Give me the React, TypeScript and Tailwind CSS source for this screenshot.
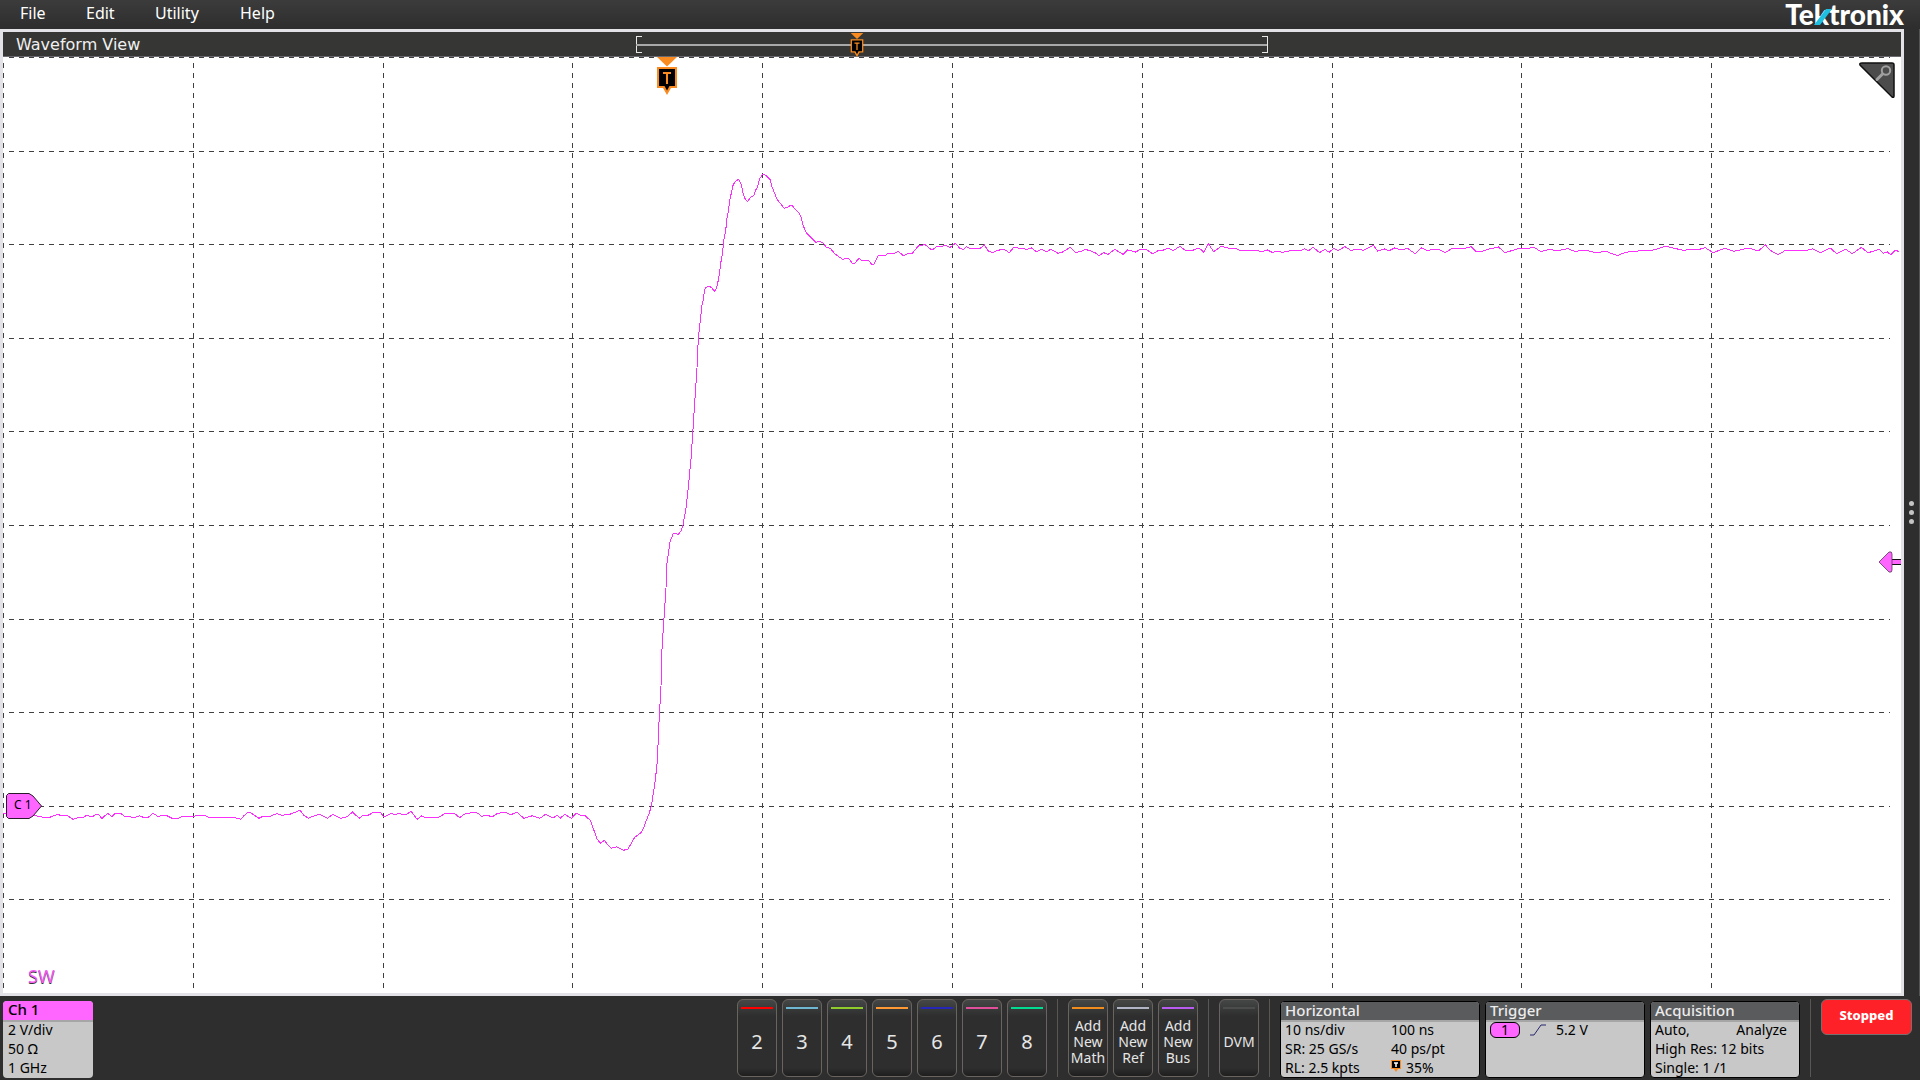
import React from 'react'

type Point = [number, number]

// the record is kept in parts, each with its own x scale
const idle: Point[] = [
    [8, 160], [85, 168], [100, 172], [115, 172], [122, 168], [133, 163], [143, 168], [155, 166], [168, 178], [180, 173], [190, 174], [200, 166],
    [212, 171], [222, 163], [228, 164], [235, 176], [248, 160], [258, 170], [266, 160], [278, 160], [288, 170], [300, 170], [310, 173], [322, 167],
    [332, 173], [342, 172], [353, 160], [365, 170], [375, 166], [385, 167], [397, 175], [412, 175], [418, 170], [443, 170], [455, 166], [472, 166],
    [485, 174], [520, 173], [545, 174], [555, 178], [562, 168], [572, 156], [580, 160], [597, 175], [608, 168], [620, 170], [638, 161], [650, 166],
    [670, 162], [692, 151], [700, 165], [711, 175], [725, 167], [738, 163], [755, 175], [768, 163], [785, 175], [800, 170], [813, 156], [828, 175],
    [838, 165], [850, 165], [863, 156], [878, 158], [885, 171], [902, 160], [912, 164], [920, 160], [930, 165], [938, 163], [948, 154], [962, 178],
    [972, 168], [982, 173], [1010, 173], [1028, 159], [1050, 162], [1060, 173], [1070, 163], [1090, 157], [1103, 160], [1110, 169], [1122, 165],
    [1135, 171], [1147, 160], [1165, 157], [1178, 164], [1192, 157], [1208, 175], [1228, 167], [1245, 175], [1258, 163], [1275, 174], [1285, 166],
    [1292, 175], [1302, 163], [1318, 175], [1328, 160], [1340, 166], [1350, 168], [1362, 182], [1370, 212], [1376, 235], [1384, 250], [1394, 241],
    [1402, 256], [1410, 265], [1422, 260], [1438, 271], [1448, 267], [1455, 252], [1463, 233], [1478, 218], [1485, 202], [1490, 183], [1497, 160],
    [1502, 138], [1508, 90], [1512, 50], [1516, 0],
]

const edge: Point[] = [
    [659, 722], [661, 686], [662, 649], [664, 618], [666, 588], [667, 563], [670, 542], [673, 534], [676, 533], [678, 535], [681, 531], [683, 525],
    [686, 508], [688, 490], [691, 459], [693, 429], [695, 398], [697, 368],
]

const overshoot: Point[] = [
    [415, 566], [418, 540], [421, 510], [424, 485], [425, 468], [431, 445], [433, 420], [437, 413], [447, 408], [455, 413], [463, 424],
    [469, 416], [473, 400], [478, 373], [482, 340], [488, 305], [491, 273], [497, 243], [500, 210], [506, 178], [509, 150], [515, 125], [518, 108],
    [524, 97], [534, 89], [538, 90], [545, 108], [549, 128], [556, 148], [563, 155], [571, 143], [583, 135], [586, 122], [593, 110], [598, 88],
    [607, 74], [614, 74], [622, 80], [631, 90], [635, 108], [640, 120], [647, 138], [652, 149], [661, 160], [672, 175], [683, 172], [691, 166],
    [698, 168], [705, 178], [715, 186], [724, 203], [730, 228], [740, 250], [755, 265], [767, 277], [779, 274], [790, 279], [798, 291], [812, 296],
    [823, 310], [835, 319], [848, 328], [866, 325], [877, 340], [884, 340], [897, 325], [905, 331], [925, 331], [935, 343], [941, 343], [955, 317],
    [975, 317], [985, 310], [1003, 310], [1015, 304], [1030, 317], [1042, 311], [1057, 310], [1075, 288], [1095, 284], [1113, 298], [1120, 298],
    [1130, 289], [1148, 289], [1155, 286], [1170, 292], [1185, 281], [1190, 283], [1200, 296],
]

const settled: Point[] = [
    [98, 88], [102, 80], [108, 86], [122, 86], [130, 75], [135, 92], [142, 98], [150, 91], [160, 88], [168, 98], [175, 82], [188, 86], [195, 88],
    [202, 84], [210, 95], [218, 88], [225, 95], [232, 88], [243, 100], [250, 96], [262, 82], [270, 97], [278, 95], [285, 88], [293, 93], [300, 98],
    [306, 107], [313, 98], [320, 103], [330, 88], [343, 103], [350, 90], [362, 96], [370, 88], [378, 88], [388, 101], [397, 92], [403, 92],
    [412, 84], [420, 92], [430, 79], [438, 90], [450, 91], [460, 84], [467, 97], [474, 70], [482, 95], [494, 79], [504, 84], [515, 84], [525, 93],
    [535, 91], [548, 91], [555, 95], [565, 90], [572, 97], [580, 94], [588, 97], [600, 92], [615, 93], [622, 86], [628, 92], [635, 82], [645, 98],
    [653, 88], [660, 97], [667, 84], [673, 92], [684, 80], [693, 91], [705, 88], [712, 91], [720, 84], [728, 76], [734, 93], [745, 87], [752, 92],
    [760, 84], [772, 90], [780, 85], [792, 101], [802, 83], [810, 91], [828, 88], [838, 98], [850, 84], [865, 87], [878, 80], [885, 94], [895, 94],
    [905, 87], [920, 81], [930, 98], [940, 92], [953, 84], [960, 87], [975, 82], [985, 95], [998, 88], [1010, 92], [1027, 86], [1037, 94],
    [1055, 91], [1070, 98], [1085, 94], [1103, 107], [1115, 97], [1135, 93], [1145, 91], [1153, 93], [1165, 86], [1177, 79], [1190, 85],
    [1205, 91], [1215, 88], [1225, 90], [1238, 83], [1250, 98], [1268, 85], [1282, 94], [1305, 84], [1320, 93], [1330, 74], [1337, 90],
    [1350, 104], [1362, 90], [1375, 93], [1393, 92], [1403, 86], [1415, 98], [1430, 84], [1440, 101], [1454, 88], [1464, 101], [1478, 82],
    [1488, 98], [1498, 93], [1505, 88], [1512, 100], [1518, 96], [1523, 104], [1530, 90], [1536, 95],
]

const place = (points: Point[], x: number, y: number, perX: number, perY: number) =>
    points.map(([px, py]) => `${(x + px / perX).toFixed(1)},${(y + py / perY).toFixed(1)}`)

const trace = [
    ...place(idle, 0, 760, 2.306, 3),
    ...place(edge, 0, 0, 1, 1),
    ...place(overshoot, 560, 150, 3, 3),
    ...place(settled, 900, 220, 1.5373, 3),
].join(' ')

const columns = [3.5, 193.5, 383.5, 572.5, 762.5, 952.5, 1142.5, 1332.5, 1521.5, 1711.5]
const rows = [57.5, 151.5, 244.5, 338.5, 431.5, 525.5, 619.5, 712.5, 806.5, 899.5]

const menus = [
    { name: 'File', width: 'w-[66px]' },
    { name: 'Edit', width: 'w-[69px]' },
    { name: 'Utility', width: 'w-[85px]' },
    { name: 'Help', width: 'w-[66px]' },
]

const channels = [
    { name: '2', color: 'bg-[#ff0000]' },
    { name: '3', color: 'bg-[#6fb7d0]' },
    { name: '4', color: 'bg-[#8fcb2b]' },
    { name: '5', color: 'bg-[#ff9933]' },
    { name: '6', color: 'bg-[#2626b8]' },
    { name: '7', color: 'bg-[#e0509a]' },
    { name: '8', color: 'bg-[#00dd90]' },
]

const adders = [
    { name: 'Math', color: 'bg-[#f08c1e]' },
    { name: 'Ref', color: 'bg-[#b0b4c4]' },
    { name: 'Bus', color: 'bg-[#b85cf0]' },
]

function Logo() {
    return (
        <div className="relative text-[28px] leading-[29px] font-black text-white font-['Lato','Noto_Sans',sans-serif]">
            Tektronix
            <svg className="absolute top-1 left-[29px] h-[22px] w-[18px]" viewBox="0 0 18 22" aria-hidden="true">
                <path d="M12 5H18L6 21H0Z" fill="#1fbfe0" />
            </svg>
        </div>
    )
}

function TriggerMarker({ className }: { className: string }) {
    return (
        <svg className={className} viewBox="0 0 22 38" aria-hidden="true">
            <path d="M1 0H21L11 9.5Z" fill="#f98b20" />
            <path d="M1 10H21V31H15L11 38L7 31H1Z" fill="#f98b20" />
            <path d="M3 12H19V29H13.5L11 33.500L8.500 29H3Z" fill="#000" />
            <path d="M7 16H15M11 16V27" stroke="#f98b20" strokeWidth="2" fill="none" />
        </svg>
    )
}

function ToolButton({ color, children }: { color: string; children: React.ReactNode }) {
    return (
        <button className="flex h-[78px] w-10 flex-col items-center rounded-md border border-[#6a6460] bg-[linear-gradient(#454646,#2e2e2e_16px,#2e2e2e_68px,#1e1e1e)] text-[#e6e6e6]">
            <span className={`mt-[7px] h-0.5 w-8 shrink-0 ${color}`} />
            <span className="flex flex-1 items-center justify-center pb-0.5">{children}</span>
        </button>
    )
}

function Divider() {
    return <div className="h-[78px] w-px bg-[#5a5654]" />
}

function Panel({ title, className, children }: { title: string; className: string; children: React.ReactNode }) {
    return (
        <section className={`mt-0.5 h-[77px] rounded border border-black bg-[#c8c8c8] text-black ${className}`}>
            <h2 className="h-5 rounded-t-[3px] border-b-2 border-[#a6a6a6] bg-[#5a5b5d] pl-1 text-[15px] leading-[17px] font-medium text-[#ececec]">{title}</h2>
            <div className="-mt-0.5 px-1 text-sm leading-[19px]">{children}</div>
        </section>
    )
}

function WaveformView() {
    return (
        <main className="flex min-w-0 flex-1 flex-col border-[3px] border-[#e2e2e7] bg-white">
            <div className="flex h-[25px] shrink-0 border-b border-[#6a6a70] bg-[#363634]">
                <h1 className="w-1/3 pt-px pl-[13px] text-base leading-6 text-[#f0f0f0] font-['DejaVu_Sans',sans-serif]">Waveform View</h1>
                <div className="relative mt-1 flex h-[17px] w-1/3 items-center">
                    <span className="h-full w-1.5 border-y border-l border-[#e8e8e8]" />
                    <span className="-mx-1.5 h-0.5 flex-1 bg-[#a8a8a8]" />
                    <span className="h-full w-1.5 border-y border-r border-[#e8e8e8]" />
                    <TriggerMarker className="absolute -top-[3px] left-[35%] h-6 w-3.5 -translate-x-1/2" />
                </div>
            </div>

            <div className="relative min-h-0 flex-1">
                <svg className="absolute inset-0 h-full w-full" viewBox="3 57 1898 936" preserveAspectRatio="none" role="img" aria-label="Channel 1 waveform">
                    <g stroke="#404040" strokeDasharray="5 5" shapeRendering="crispEdges">
                        {columns.map((x) => (
                            <line key={x} x1={x} y1="63" x2={x} y2="988" />
                        ))}
                        {rows.map((y) => (
                            <line key={y} x1="9" y1={y} x2="1890" y2={y} />
                        ))}
                    </g>
                    <polyline points={trace} fill="none" stroke="#fb2ffb" strokeWidth="1" shapeRendering="crispEdges" />
                </svg>

                <TriggerMarker className="absolute top-0 left-[35%] h-[38px] w-[22px] -translate-x-1/2" />

                <button aria-label="Zoom" className="absolute top-1 right-[5px]">
                    <svg className="h-[38px] w-[38px]" viewBox="0 0 38 38" fill="none">
                        <path d="M4 2H34Q36 2 36 4V35Q36 37 34 36L2 4Q1 2 4 2Z" fill="#4c4c4c" stroke="#111" strokeWidth="1.500" />
                        <circle cx="28" cy="9.500" r="4.200" stroke="#a0a0a0" strokeWidth="2" />
                        <path d="M24.500 13L19 18.500" stroke="#a0a0a0" strokeWidth="3" strokeLinecap="round" />
                    </svg>
                </button>

                <div className="absolute top-[80%] left-[3px] h-[26px] w-9 -translate-y-1/2 text-xs">
                    <svg className="absolute inset-0 h-full w-full" viewBox="0 0 36 26" aria-hidden="true">
                        <path d="M2.500 0.500H23L27 3L35.500 13L27 23L23 25.500H2.500L0.500 23.500V2.500Z" fill="#ff66ff" stroke="#2b1a2b" />
                    </svg>
                    <span className="relative block pl-2 leading-6">C 1</span>
                </div>

                <svg className="absolute top-[54%] right-0 h-[22px] w-[23px] -translate-y-1/2" viewBox="0 0 23 22" aria-hidden="true">
                    <path d="M13 9H23V13H13Z" fill="#ff66ff" />
                    <path d="M13 8.500H23M13 13.500H23" stroke="#111" />
                    <path d="M1 11L11 1Q14 0 14 3V19Q14 22 11 21Z" fill="#ff66ff" stroke="#5a3a5a" strokeWidth="0.800" />
                </svg>

                <p className="absolute bottom-[3px] left-[25px] text-lg text-[#f45cf4] [text-shadow:0_1px_0_#333]">SW</p>
            </div>
        </main>
    )
}

export default function App() {
    return (
        <div className="flex h-screen flex-col bg-[#2e2e2e] font-['Noto_Sans',sans-serif]">
            <header className="flex h-[29px] shrink-0 items-start justify-between bg-linear-to-b from-[#3c3c3c] to-[#2d2d2d] pr-4">
                <nav className="flex">
                    {menus.map((menu) => (
                        <button key={menu.name} className={`pl-5 text-left text-base leading-[26px] text-white ${menu.width}`}>
                            {menu.name}
                        </button>
                    ))}
                </nav>
                <Logo />
            </header>

            <div className="flex min-h-0 flex-1">
                <WaveformView />
                <button aria-label="Results bar" className="flex w-4 flex-col items-center justify-center gap-1 border-r border-[#555]">
                    <span className="h-[5px] w-[5px] rounded-full bg-[#c4c4c4]" />
                    <span className="h-[5px] w-[5px] rounded-full bg-[#c4c4c4]" />
                    <span className="h-[5px] w-[5px] rounded-full bg-[#c4c4c4]" />
                </button>
            </div>

            <footer className="flex h-[84px] shrink-0 items-start justify-between pt-[3px] pr-2 pl-[3px]">
                <section className="mt-0.5 h-[77px] w-[90px] rounded bg-[#c8c8c8] text-black">
                    <h2 className="h-[21px] rounded-t border-b-2 border-[#a6a6a6] bg-[#ff66ff] pl-[5px] text-[15px] leading-[17px] font-medium">Ch 1</h2>
                    <div className="-mt-0.5 pl-[5px] text-sm leading-[19px]">
                        <p>2 V/div</p>
                        <p>50 Ω</p>
                        <p>1 GHz</p>
                    </div>
                </section>

                <div className="flex gap-2.5">
                    <div className="flex gap-[5px]">
                        {channels.map((channel) => (
                            <ToolButton key={channel.name} color={channel.color}>
                                <span className="text-xl">{channel.name}</span>
                            </ToolButton>
                        ))}
                    </div>
                    <Divider />
                    <div className="flex gap-[5px]">
                        {adders.map((adder) => (
                            <ToolButton key={adder.name} color={adder.color}>
                                <span className="text-sm leading-4">
                                    Add
                                    <br />
                                    New
                                    <br />
                                    {adder.name}
                                </span>
                            </ToolButton>
                        ))}
                    </div>
                    <Divider />
                    <ToolButton color="bg-[#4c4c4c]">
                        <span className="text-sm">DVM</span>
                    </ToolButton>
                    <Divider />
                    <div className="flex gap-[5px]">
                        <Panel title="Horizontal" className="w-[200px]">
                            <div className="grid grid-cols-[106px_1fr]">
                                <span>10 ns/div</span>
                                <span>100 ns</span>
                                <span>SR: 25 GS/s</span>
                                <span>40 ps/pt</span>
                                <span>RL: 2.5 kpts</span>
                                <span className="flex items-center gap-[5px]">
                                    <svg className="mb-1 h-3 w-2.5" viewBox="0 0 10 12" aria-hidden="true">
                                        <path d="M0 0H10V9H7L5 12L3 9H0Z" fill="#f98b20" />
                                        <path d="M1 1H9V8H1Z" fill="#000" />
                                        <path d="M3 3H7M5 3V7" stroke="#fff" strokeWidth="1.500" />
                                    </svg>
                                    35%
                                </span>
                            </div>
                        </Panel>
                        <Panel title="Trigger" className="w-40">
                            <div className="flex items-center">
                                <span className="h-4 w-[30px] rounded-md border border-black bg-[#ff66ff] text-center leading-[14px]">1</span>
                                <svg className="ml-2.5 h-3 w-4" viewBox="0 0 16 12" fill="none" aria-hidden="true">
                                    <path d="M0 11H4L11 1H16" stroke="#26266e" />
                                </svg>
                                <span className="ml-2.5">5.2 V</span>
                            </div>
                        </Panel>
                        <Panel title="Acquisition" className="w-[150px]">
                            <p className="flex justify-between pr-2">
                                <span>Auto,</span>
                                <span>Analyze</span>
                            </p>
                            <p>High Res: 12 bits</p>
                            <p>Single: 1 /1</p>
                        </Panel>
                    </div>
                    <Divider />
                    <button className="h-9 w-[91px] rounded-md border border-[#77706e] bg-[#ff2128] pb-0.5 text-[13px] font-extrabold text-white">Stopped</button>
                </div>
            </footer>
        </div>
    )
}
